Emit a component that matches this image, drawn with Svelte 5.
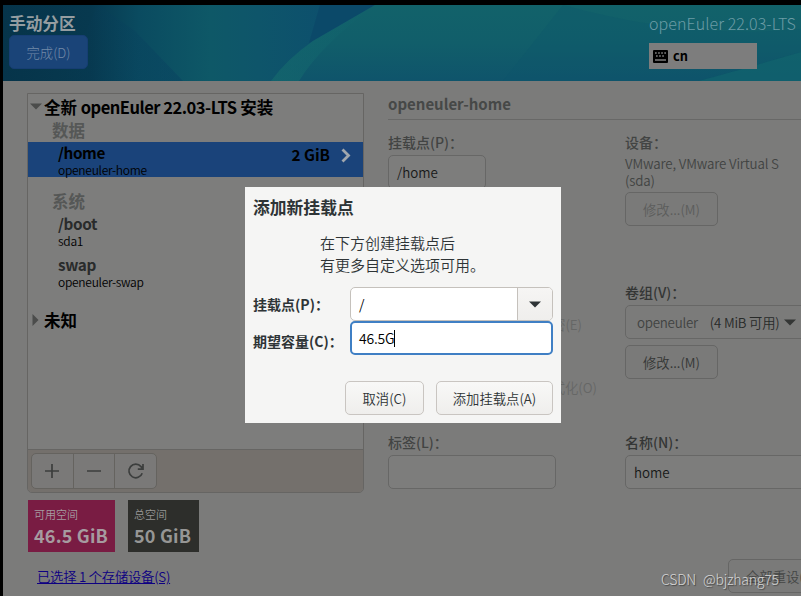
<script lang="ts">
	interface MountPoint {
		name: string;
		device: string;
		size?: string;
		selected?: boolean;
	}

	interface Group {
		title: string;
		mounts: MountPoint[];
	}

	const groups: Group[] = [
		{
			title: '数据',
			mounts: [{ name: '/home', device: 'openeuler-home', size: '2 GiB', selected: true }]
		},
		{
			title: '系统',
			mounts: [
				{ name: '/boot', device: 'sda1' },
				{ name: 'swap', device: 'openeuler-swap' }
			]
		}
	];

	let mountPoint = $state('/');
	let capacity = $state('46.5G');
</script>

<div class="screen">
	<header class="banner">
		<svg class="art" viewBox="0 0 798 76" preserveAspectRatio="none" aria-hidden="true">
			<defs>
				<linearGradient id="base" x1="0" x2="1" y1="0" y2="0">
					<stop offset="0" stop-color="#06344a" />
					<stop offset="0.11" stop-color="#07394f" />
					<stop offset="0.17" stop-color="#0a4b60" />
					<stop offset="0.26" stop-color="#0e5867" />
					<stop offset="0.32" stop-color="#0e556a" />
					<stop offset="0.4" stop-color="#0d506d" />
				</linearGradient>
				<linearGradient id="wave" x1="0" x2="0" y1="0" y2="1">
					<stop offset="0" stop-color="#12626a" />
					<stop offset="0.5" stop-color="#115e6a" />
					<stop offset="1" stop-color="#0f546b" />
				</linearGradient>
				<linearGradient id="glow" x1="0.9" x2="0.1" y1="0" y2="1">
					<stop offset="0" stop-color="#126a72" stop-opacity="0" />
					<stop offset="1" stop-color="#156b6d" />
				</linearGradient>
				<linearGradient id="fold" x1="0" x2="1" y1="0" y2="0">
					<stop offset="0" stop-color="#073b5a" stop-opacity="0" />
					<stop offset="1" stop-color="#083f60" />
				</linearGradient>
			</defs>
			<rect width="798" height="76" fill="url(#base)" />
			<path d="M95 0 L132 26 L180 76 L60 76Z" fill="url(#fold)" opacity="0.45" />
			<path d="M317 0 H372 L306 38Z" fill="#0b4668" opacity="0.7" />
			<path d="M372 0 L310 36 Q284 54 268 76 H798 V0Z" fill="url(#wave)" />
			<path d="M372 0 L310 36 Q284 54 268 76 H296 Q318 40 372 0Z" fill="url(#glow)" opacity="0.6" />
			<path d="M695 76 C725 68 760 58 798 47 V76Z" fill="#11646d" opacity="0.7" />
			<path d="M560 0 C640 22 720 32 798 24 V47 C760 58 725 68 695 76 H500Z" fill="#0d536c" opacity="0.25" />
		</svg>
		<div class="banner-left">
			<h1>手动分区</h1>
			<button class="done">完成(D)</button>
		</div>
		<div class="banner-right">
			<p class="product">openEuler 22.03-LTS</p>
			<div class="keyboard">
				<svg width="15" height="13" viewBox="0 0 15 13" aria-hidden="true">
					<rect width="15" height="13" rx="1" fill="#000" />
					<path d="M2 3h11M3 6h9" stroke="#7d7d7d" stroke-width="1.7" stroke-dasharray="1.7 1.4" />
					<path d="M2 10h11" stroke="#7d7d7d" stroke-width="1.5" />
				</svg>
				<span>cn</span>
			</div>
		</div>
	</header>

	<main>
		<section class="side">
			<div class="tree-box">
				<div class="tree">
					<div class="root">
						<svg width="12" height="7" viewBox="0 0 12 7"><path d="M0 .5h12L6 6.5z" fill="#4b4c4b" /></svg>
						<span>全新 <span class="release">openEuler 22.03-LTS</span> 安装</span>
					</div>
					{#each groups as group (group.title)}
						<div class="group">
							<h2>{group.title}</h2>
							{#each group.mounts as mount (mount.name)}
								<div class="mount" class:selected={mount.selected}>
									<div class="mount-text">
										<p class="name">{mount.name}</p>
										<p class="device">{mount.device}</p>
									</div>
									{#if mount.size}
										<span class="size">{mount.size}</span>
										<svg class="chevron" width="10" height="15" viewBox="0 0 10 15">
											<path d="M1.5 1.5l6 6-6 6" fill="none" stroke="#a1a7ad" stroke-width="2.8" />
										</svg>
									{/if}
								</div>
							{/each}
						</div>
					{/each}
					<div class="root closed">
						<svg width="7" height="12" viewBox="0 0 7 12"><path d="M.5 0v12l6-6z" fill="#4b4c4b" /></svg>
						<span>未知</span>
					</div>
				</div>
				<div class="toolbar">
					<div class="tools">
						<button aria-label="添加">
							<svg width="16" height="16" viewBox="0 0 16 16"><path d="M1 8h14M8 1v14" /></svg>
						</button>
						<button aria-label="删除">
							<svg width="16" height="16" viewBox="0 0 16 16"><path d="M1 8h14" /></svg>
						</button>
						<button aria-label="刷新">
							<svg width="18" height="18" viewBox="0 0 18 18">
								<path d="M15.2 11.2A6.8 6.8 0 1 1 14 4.6L15.8 6.8M16 2v5.2h-5.2" />
							</svg>
						</button>
					</div>
				</div>
			</div>

			<div class="tiles">
				<div class="tile available">
					<p>可用空间</p>
					<strong>46.5 GiB</strong>
				</div>
				<div class="tile total">
					<p>总空间</p>
					<strong>50 GiB</strong>
				</div>
			</div>
			<a class="devices" href="#devices">已选择 1 个存储设备(S)</a>
		</section>

		<section class="details">
			<h2>openeuler-home</h2>
			<div class="columns">
				<div class="column">
					<div class="field mount-field">
						<p class="label">挂载点(P)：</p>
						<div class="entry short">/home</div>
					</div>
					<div class="options">
						<div class="option">加密(E)</div>
						<div class="option">重新格式化(O)</div>
					</div>
					<div class="field">
						<p class="label">标签(L)：</p>
						<div class="entry medium"></div>
					</div>
				</div>
				<div class="column">
					<div class="field device-field">
						<p class="label">设备：</p>
						<p class="info">VMware, VMware Virtual S<br />(sda)</p>
						<button class="modify" disabled>修改...(M)</button>
					</div>
					<div class="field volume-field">
						<p class="label dark">卷组(V)：</p>
						<div class="entry select">
							<span class="volume">openeuler</span>
							<span class="free">(4 MiB 可用)</span>
							<svg width="12" height="7" viewBox="0 0 12 7"><path d="M0 .5h12L6 6.5z" fill="#343635" /></svg>
						</div>
						<button class="modify">修改...(M)</button>
					</div>
					<div class="field">
						<p class="label dark">名称(N)：</p>
						<div class="entry wide">home</div>
					</div>
				</div>
			</div>
			<button class="reset">全部重设(R)</button>
		</section>
	</main>

	<div class="dialog" role="dialog" aria-label="添加新挂载点">
		<h2>添加新挂载点</h2>
		<p class="hint">在下方创建挂载点后<br />有更多自定义选项可用。</p>
		<div class="row">
			<span class="caption">挂载点(P)：</span>
			<div class="combo">
				<span class="value">{mountPoint}</span>
				<button aria-label="选择挂载点">
					<svg width="12" height="7" viewBox="0 0 12 7"><path d="M0 .5h12L6 6.5z" fill="#2e3436" /></svg>
				</button>
			</div>
		</div>
		<div class="row">
			<span class="caption second">期望容量(C)：</span>
			<div class="combo focused">
				<span class="value">{capacity}</span><i class="caret"></i>
			</div>
		</div>
		<div class="actions">
			<button>取消(C)</button>
			<button class="add">添加挂载点(A)</button>
		</div>
	</div>

	<span class="watermark">CSDN @bjzhang75</span>
</div>

<style>
	:global(body) {
		background: #000;
	}

	.screen {
		position: relative;
		box-sizing: border-box;
		width: 801px;
		height: 596px;
		padding: 5px 0 0 3px;
		overflow: hidden;
		background: #000;
		font-family: 'Noto Sans CJK SC', 'Noto Sans', sans-serif;
		font-size: 13.33px;
		font-weight: 350;
		color: #171918;
	}

	.screen * {
		box-sizing: border-box;
	}

	h1,
	h2,
	p {
		margin: 0;
	}

	svg {
		display: block;
		flex: none;
	}

	button {
		padding: 0;
		font: inherit;
		white-space: nowrap;
	}

	.banner {
		position: relative;
		display: flex;
		justify-content: space-between;
		height: 76px;
	}

	.art {
		position: absolute;
		inset: 0;
		width: 100%;
		height: 100%;
	}

	.banner-left,
	.banner-right {
		position: relative;
	}

	.banner-left {
		padding: 7px 0 0 6px;
	}

	h1 {
		font-size: 16.7px;
		line-height: 22px;
		color: #959da1;
	}

	.done {
		display: block;
		width: 79px;
		height: 34px;
		margin-top: 1px;
		border: 1px solid #163e72;
		border-radius: 5px;
		background: #1a4478;
		color: #738aa8;
		font-weight: 300;
	}

	.banner-right {
		width: 152px;
		padding-top: 6px;
	}

	.product {
		font-size: 16px;
		font-weight: 300;
		letter-spacing: 0.07px;
		line-height: 24px;
		white-space: nowrap;
		color: #6c9ca6;
	}

	.keyboard {
		display: flex;
		align-items: center;
		gap: 5px;
		width: 108px;
		height: 26px;
		margin-top: 8px;
		padding: 1px 0 0 4px;
		background: #7d7d7d;
		color: #000;
		font-weight: 700;
		line-height: 20px;
	}

	.keyboard span {
		margin-top: -1px;
		font-size: 12.8px;
	}

	main {
		display: flex;
		height: 515px;
		padding: 12px 0 0 24px;
		background: #7b7b7a;
	}

	.side {
		flex: none;
		width: 337px;
	}

	.tree-box {
		height: 400px;
		border: 1px solid #666563;
		border-radius: 0 0 5px 5px;
		overflow: hidden;
	}

	.tree {
		height: 355px;
		background: #7d7d7c;
	}

	.root {
		display: flex;
		align-items: center;
		gap: 2px;
		height: 26px;
		padding: 0 0 1px 2px;
		font-size: 16.5px;
		font-weight: 700;
		color: #000;
		white-space: nowrap;
	}

	.release {
		letter-spacing: -0.5px;
	}

	.root.closed {
		gap: 5px;
		padding-left: 4px;
		margin-top: -2px;
	}

	.group {
		padding-bottom: 14px;
	}

	.group h2 {
		height: 22px;
		padding-left: 24px;
		font-size: 16.5px;
		line-height: 21px;
		color: #555756;
	}

	.mount {
		display: flex;
		height: 35px;
		margin-bottom: 6px;
		padding: 1px 12px 0 30px;
	}

	.group:nth-child(2) {
		padding-bottom: 8px;
	}

	.selected {
		background: #1a437a;
	}

	.mount-text {
		flex: 1;
	}

	.name {
		font-size: 15.3px;
		font-weight: 700;
		line-height: 18px;
		letter-spacing: -0.4px;
		color: #292b2b;
	}

	.device {
		font-size: 12px;
		line-height: 17px;
		letter-spacing: -0.28px;
		color: #000;
	}

	.selected .name,
	.selected .size {
		color: #000;
	}

	.size {
		padding-top: 1px;
		font-size: 15.3px;
		font-weight: 700;
		line-height: 20px;
	}

	.chevron {
		margin: 5px 0 0 11px;
	}

	.toolbar {
		height: 44px;
		padding: 3px;
		border-top: 1px solid #666563;
		background: #74706c;
	}

	.tools {
		display: flex;
		width: 126px;
		height: 36px;
		border: 1px solid #65635f;
		border-radius: 5px;
		background: #7a7978;
	}

	.tools button {
		display: flex;
		flex: 1;
		align-items: center;
		justify-content: center;
		border: 0;
		background: none;
	}

	.tools button + button {
		border-left: 1px solid #65635f;
	}

	.tools path {
		fill: none;
		stroke: #3c3e3d;
		stroke-width: 1.7;
	}

	.tiles {
		display: flex;
		gap: 13px;
		padding: 7px 0 0 1px;
	}

	.tile {
		height: 52px;
		padding: 5px 0 0 6px;
		white-space: nowrap;
	}

	.tile p {
		font-size: 11px;
		line-height: 19px;
		color: #a69ba0;
	}

	.tile strong {
		display: block;
		font-size: 18px;
		line-height: 22px;
		letter-spacing: 0.2px;
		color: #a69ba0;
	}

	.available {
		width: 87px;
		background: #791c43;
	}

	.total {
		width: 71px;
		background: #2d2e2b;
	}

	.total p,
	.total strong {
		color: #969695;
	}

	.devices {
		display: block;
		margin: 14px 0 0 10px;
		line-height: 22px;
		letter-spacing: -0.25px;
		color: #0d0082;
	}

	.details {
		flex: 1;
		min-width: 0;
		padding-left: 24px;
	}

	.details h2 {
		height: 27px;
		border-bottom: 1px solid #686867;
		font-size: 15px;
		line-height: 21px;
		color: #464847;
	}

	.columns {
		display: flex;
		padding-top: 12px;
	}

	.column {
		flex: none;
		width: 237px;
	}

	.label {
		height: 23px;
		font-size: 14px;
		font-weight: 500;
		line-height: 20px;
		color: #424443;
	}

	.label.dark {
		color: #343635;
	}

	.entry {
		display: flex;
		align-items: center;
		height: 34px;
		padding-left: 8px;
		border: 1px solid #676766;
		border-radius: 5px;
		background: #7d7d7c;
	}

	.entry.short {
		width: 98px;
	}

	.entry.medium {
		width: 168px;
	}

	.entry.select {
		width: 200px;
		margin-bottom: 6px;
		padding-left: 11px;
		background: none;
		white-space: nowrap;
	}

	.entry.wide {
		width: 200px;
	}

	.volume {
		letter-spacing: -0.25px;
		color: #414342;
	}

	.free {
		margin: 0 4px 0 12px;
		letter-spacing: -0.2px;
		color: #282a29;
	}

	.mount-field {
		height: 175px;
	}

	.options {
		height: 125px;
		padding-top: 8px;
		color: #666766;
		line-height: 20px;
	}

	.option {
		width: 194px;
		height: 63px;
		text-align: right;
	}

	.option + .option {
		width: 209px;
		height: 54px;
	}

	.device-field,
	.volume-field {
		height: 150px;
	}

	.info {
		height: 37px;
		line-height: 17px;
		letter-spacing: -0.15px;
		white-space: nowrap;
		color: #424443;
	}

	.modify {
		width: 93px;
		height: 34px;
		border: 1px solid #666665;
		border-radius: 5px;
		background: #7a7a79;
		color: #343635;
	}

	.modify:disabled {
		color: #5c5d5c;
	}

	.reset {
		display: block;
		width: 120px;
		height: 34px;
		margin: 70px 0 0 340px;
		padding-left: 17px;
		border: 1px solid #666665;
		border-radius: 5px;
		background: #7a7a79;
		color: #444645;
		text-align: left;
	}

	.dialog {
		position: absolute;
		top: 187px;
		left: 245px;
		width: 316px;
		height: 236px;
		padding: 9px 8px 8px;
		background: #f5f5f4;
		color: #2e3436;
	}

	.dialog h2 {
		font-size: 16.8px;
		line-height: 23px;
	}

	.hint {
		padding: 13px 0 11px 67px;
		font-size: 15px;
		line-height: 22px;
	}

	.row {
		display: flex;
		justify-content: space-between;
	}

	.caption {
		font-size: 14px;
		font-weight: 700;
		line-height: 34px;
		white-space: nowrap;
	}

	.caption.second {
		line-height: 40px;
		height: 34px;
	}

	.combo {
		display: flex;
		flex: none;
		align-items: center;
		width: 203px;
		height: 34px;
		padding-left: 8px;
		border: 1px solid #c5c1bc;
		border-radius: 5px;
		background: #fff;
		color: #000;
		overflow: hidden;
	}

	.combo .value {
		padding-bottom: 1px;
		font-size: 14px;
		letter-spacing: -0.2px;
	}

	.combo button {
		display: flex;
		align-items: center;
		justify-content: center;
		width: 35px;
		height: 34px;
		margin-left: auto;
		border: 0;
		border-left: 1px solid #c5c1bc;
		background: linear-gradient(#f6f5f4, #efeeec);
	}

	.focused {
		padding-left: 7px;
		border: 2px solid #3f7fc4;
	}

	.caret {
		width: 1px;
		height: 17px;
		background: #000;
	}

	.actions {
		display: flex;
		justify-content: flex-end;
		gap: 12px;
		margin-top: 26px;
	}

	.actions button {
		width: 79px;
		height: 34px;
		border: 1px solid #c9c5c1;
		border-radius: 5px;
		background: linear-gradient(#f8f8f7, #efeeec);
		color: #2e3436;
	}

	.actions .add {
		width: 117px;
	}

	.watermark {
		position: absolute;
		left: 661px;
		top: 569px;
		font-size: 14px;
		font-weight: 300;
		line-height: 20px;
		letter-spacing: -0.2px;
		white-space: nowrap;
		word-spacing: 4px;
		color: #d5d5d5;
		text-shadow: 1px 1px 1px #444;
	}
</style>
